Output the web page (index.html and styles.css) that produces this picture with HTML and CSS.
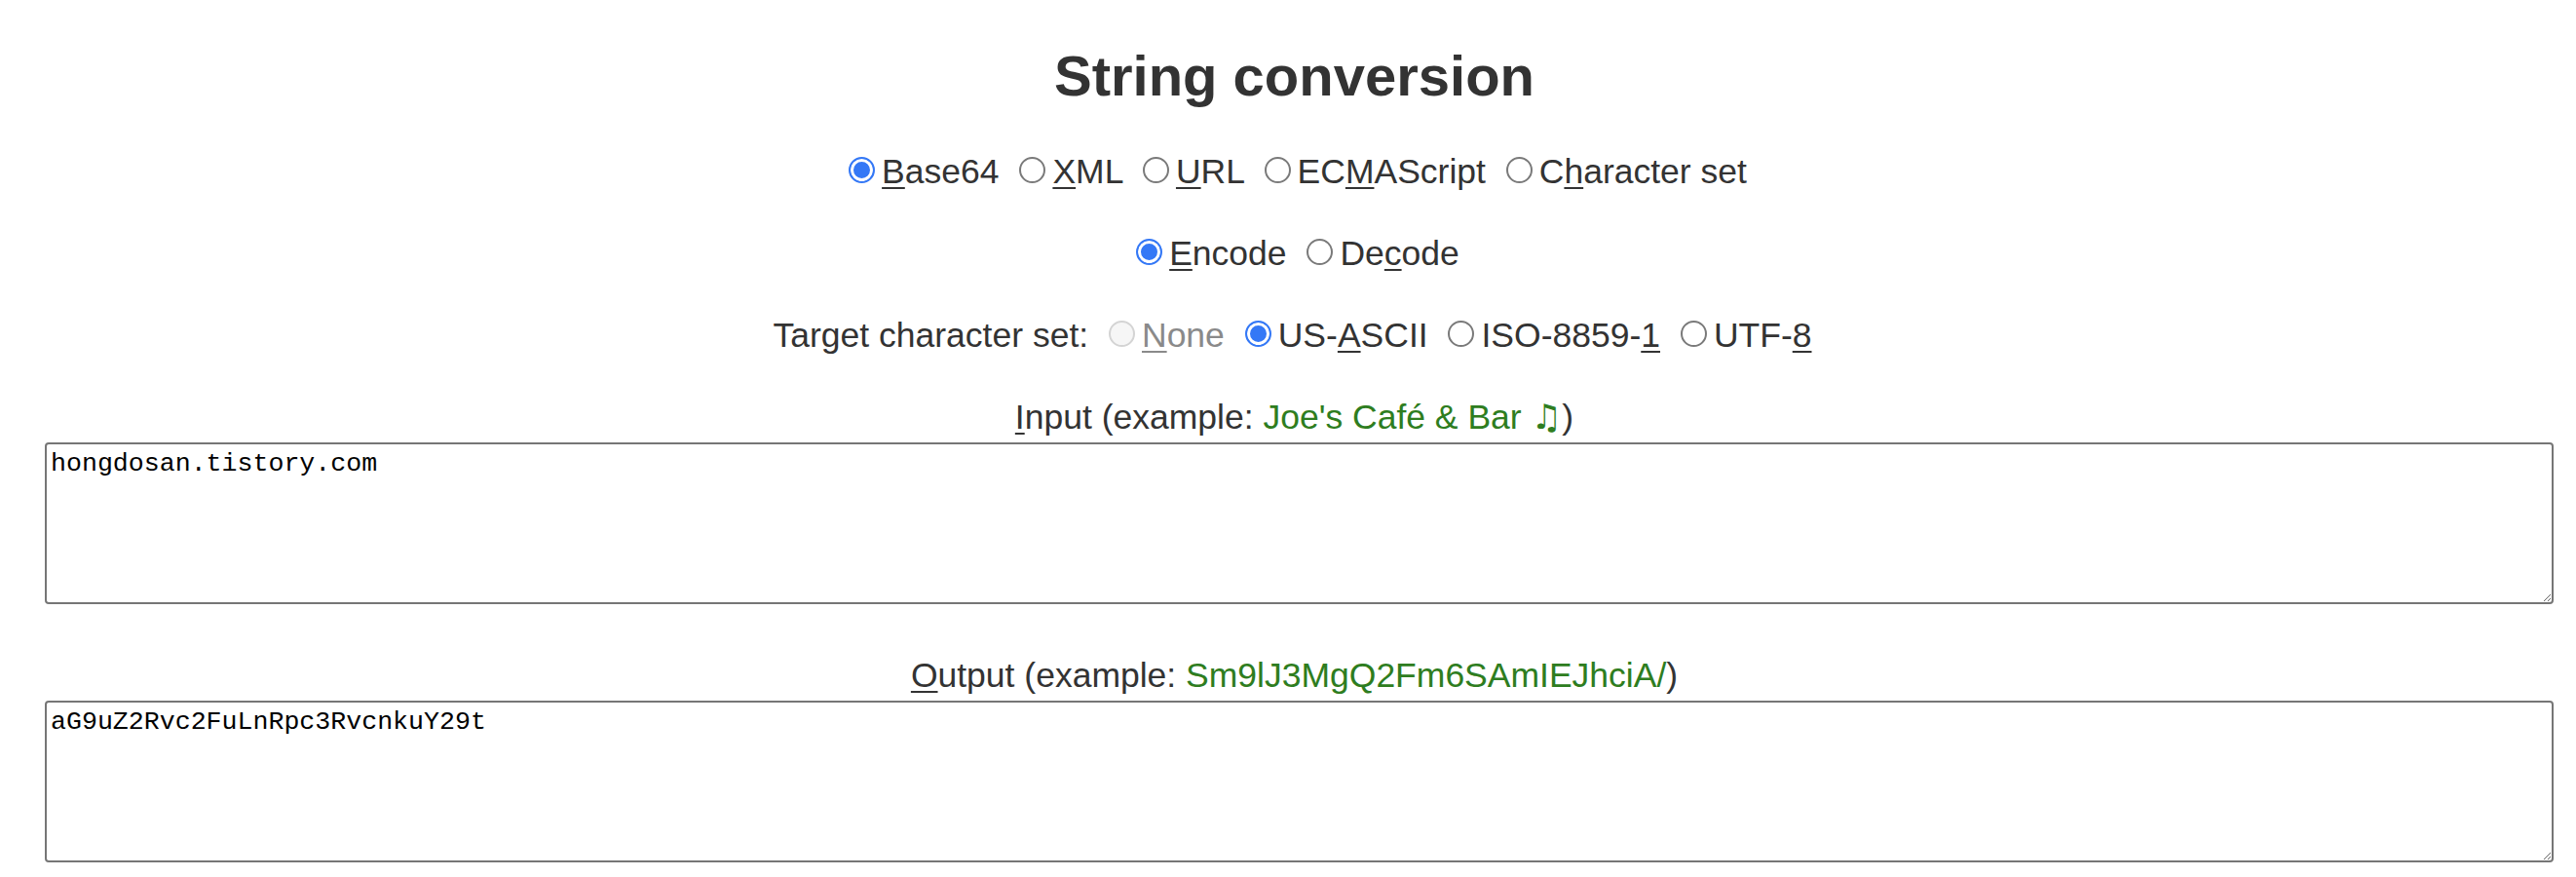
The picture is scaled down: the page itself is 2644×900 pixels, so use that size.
FILE: index.html
```html
<!DOCTYPE html>
<html lang="en">
<head>
<meta charset="utf-8">
<title>String conversion</title>
<link rel="stylesheet" href="styles.css">
</head>
<body>
<main class="page">
  <h1 class="title">String conversion</h1>
  <div class="row">
    <label class="opt"><input type="radio" name="fmt" checked><u>B</u>ase64</label>
    <label class="opt"><input type="radio" name="fmt"><u>X</u>ML</label>
    <label class="opt"><input type="radio" name="fmt"><u>U</u>RL</label>
    <label class="opt"><input type="radio" name="fmt">EC<u>M</u>AScript</label>
    <label class="opt"><input type="radio" name="fmt">C<u>h</u>aracter set</label>
  </div>
  <div class="row">
    <label class="opt"><input type="radio" name="dir" checked><u>E</u>ncode</label>
    <label class="opt"><input type="radio" name="dir">De<u>c</u>ode</label>
  </div>
  <div class="row">
    <span class="lead">Target character set:</span>
    <label class="opt disabled"><input type="radio" name="cs" disabled><u>N</u>one</label>
    <label class="opt"><input type="radio" name="cs" checked>US-<u>A</u>SCII</label>
    <label class="opt"><input type="radio" name="cs">ISO-8859-<u>1</u></label>
    <label class="opt"><input type="radio" name="cs">UTF-<u>8</u></label>
  </div>
  <label class="field-label" for="in"><u>I</u>nput (example: <span class="ex">Joe's Café &amp; Bar <span class="note">♫</span></span>)</label>
  <textarea id="in" class="box" spellcheck="false">hongdosan.tistory.com</textarea>
  <label class="field-label second" for="out"><u>O</u>utput (example: <span class="ex">Sm9lJ3MgQ2Fm6SAmIEJhciA/</span>)</label>
  <textarea id="out" class="box" spellcheck="false">aG9uZ2Rvc2FuLnRpc3RvcnkuY29t</textarea>
</main>
</body>
</html>
```
FILE: styles.css
```css
html, body {
  margin: 0;
  padding: 0;
  background: #ffffff;
}

.page {
  padding: 44px 23px 0 46px;
  color: #333333;
  font-family: "Liberation Sans", Arial, Helvetica, sans-serif;
  font-size: 35.5px;
  text-align: center;
}

.title {
  margin: 0 0 22px;
  padding-right: 10px;
  font-size: 58px;
  line-height: 68px;
  font-weight: bold;
  color: #333333;
}

.row {
  padding-right: 14px;
  line-height: 84px;
  white-space: nowrap;
}

.opt {
  cursor: default;
}

.opt u,
.field-label u {
  text-decoration-thickness: 2px;
  text-underline-offset: 4px;
}

.opt input {
  -webkit-appearance: none;
  appearance: none;
  box-sizing: border-box;
  width: 27px;
  height: 27px;
  margin: 0 7px 0 11px;
  border: 2px solid #7a7a7a;
  border-radius: 50%;
  background: #ffffff;
  vertical-align: 0;
}

.opt input:checked {
  border-color: #3478f6;
  background: #3478f6;
  box-shadow: inset 0 0 0 3px #ffffff;
}

.opt input:disabled {
  border-color: #d4d4d4;
  background: #f6f6f6;
}

.opt.disabled {
  color: #8a8a8a;
}

.field-label {
  display: block;
  margin-top: 22px;
  padding-right: 10px;
  line-height: 40px;
}

.field-label.second {
  margin-top: 53px;
}

.ex {
  color: #2e7d20;
}

.note {
  font-family: "DejaVu Sans", sans-serif;
  font-weight: bold;
}

.box {
  display: block;
  box-sizing: border-box;
  width: 100%;
  height: 166px;
  margin: 6px 0 0;
  padding: 5px 4px 3px;
  border: 2px solid #767676;
  border-radius: 4px;
  font-family: "Liberation Mono", "Courier New", monospace;
  font-size: 26.6px;
  line-height: 30px;
  color: #000000;
  background: #ffffff;
  resize: both;
  text-align: left;
}
```
